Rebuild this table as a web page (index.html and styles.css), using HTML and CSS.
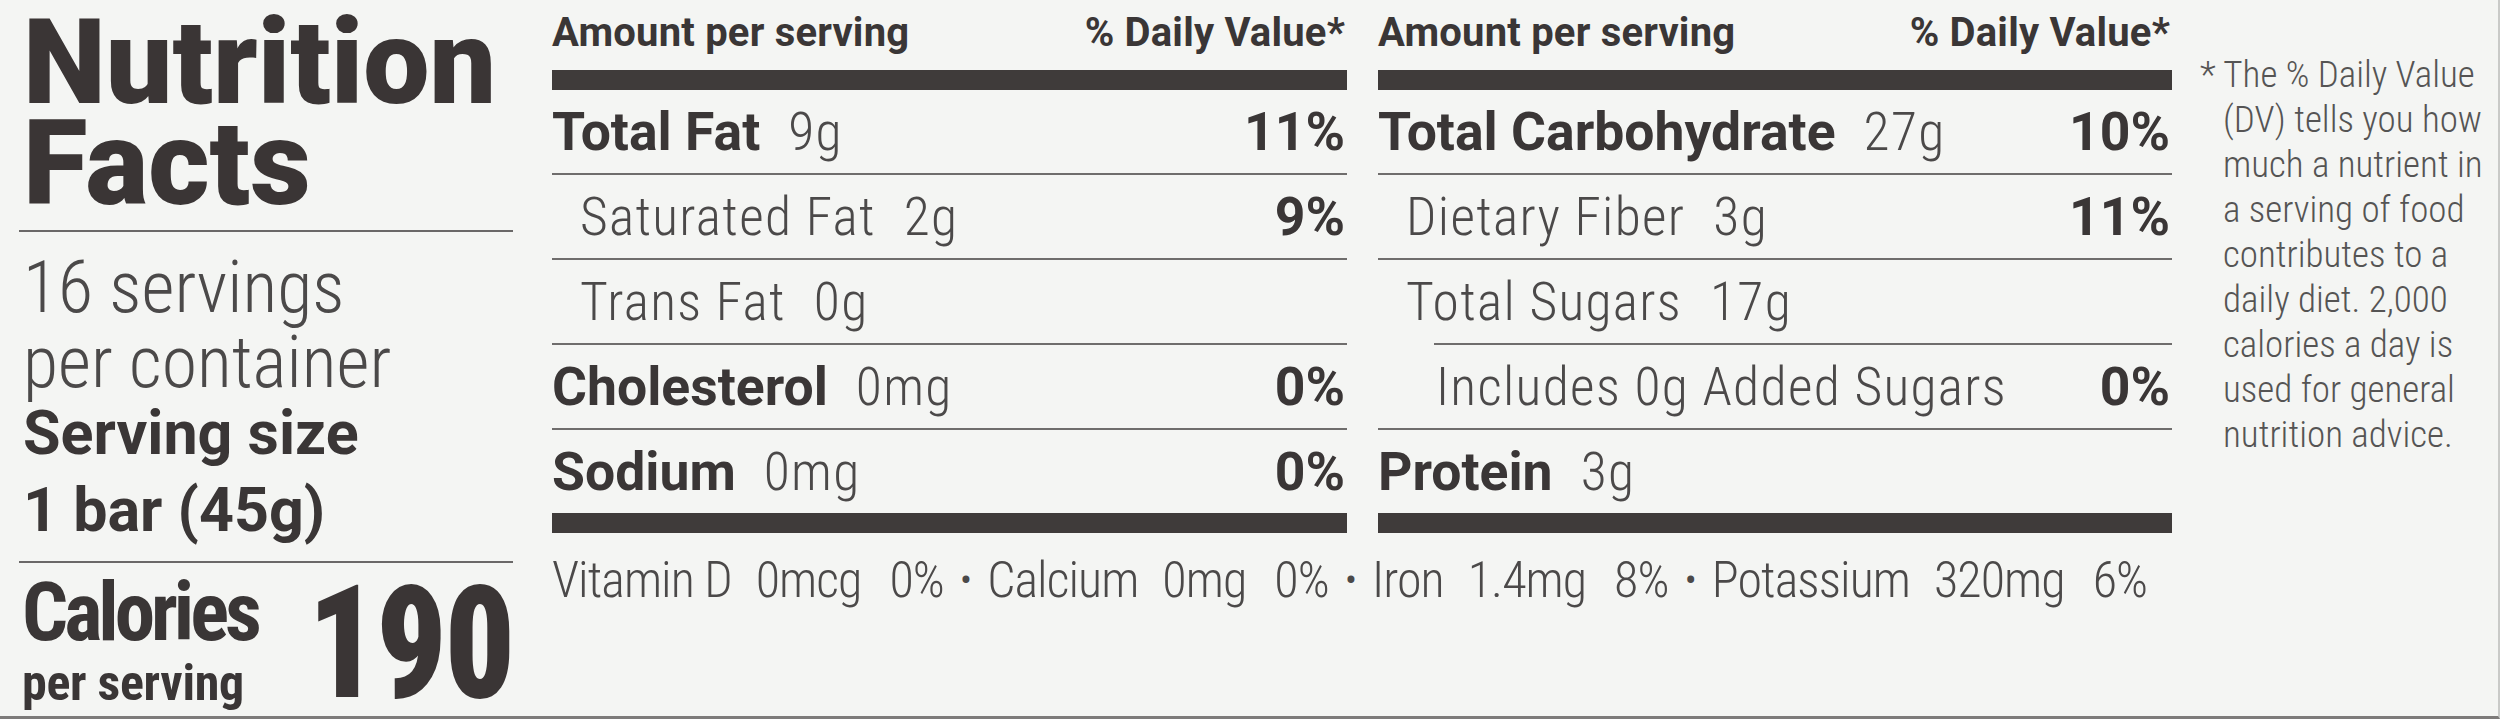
FILE: index.html
```html
<!DOCTYPE html>
<html lang="en">
<head>
<meta charset="utf-8">
<title>Nutrition Facts</title>
<link rel="stylesheet" href="styles.css">
</head>
<body>
<main class="label">
  <section class="title-col">
    <h1 class="title">Nutrition<br>Facts</h1>
    <div class="rule"></div>
    <p class="servings">16 servings<br>per container</p>
    <p class="size">Serving size<br>1 bar (45g)</p>
    <div class="rule"></div>
    <div class="calories">
      <div class="cal-label">
        <span class="cal-word">Calories</span>
        <span class="cal-sub">per serving</span>
      </div>
      <div class="cal-num">190</div>
    </div>
  </section>

  <section class="facts">
    <div class="facts-cols">
      <div class="fcol">
        <div class="head"><span>Amount per serving</span><span>% Daily Value*</span></div>
        <div class="bar"></div>
        <div class="row"><span class="name"><b>Total Fat</b><span class="amt">9g</span></span><b class="dv">11%</b></div>
        <div class="row sub"><span class="name">Saturated Fat<span class="amt">2g</span></span><b class="dv">9%</b></div>
        <div class="row sub"><span class="name">Trans Fat<span class="amt">0g</span></span></div>
        <div class="row"><span class="name"><b>Cholesterol</b><span class="amt">0mg</span></span><b class="dv">0%</b></div>
        <div class="row last"><span class="name"><b>Sodium</b><span class="amt">0mg</span></span><b class="dv">0%</b></div>
        <div class="bar"></div>
      </div>
      <div class="fcol">
        <div class="head"><span>Amount per serving</span><span>% Daily Value*</span></div>
        <div class="bar"></div>
        <div class="row"><span class="name"><b>Total Carbohydrate</b><span class="amt">27g</span></span><b class="dv">10%</b></div>
        <div class="row sub"><span class="name">Dietary Fiber<span class="amt">3g</span></span><b class="dv">11%</b></div>
        <div class="row sub short"><span class="name">Total Sugars<span class="amt">17g</span></span></div>
        <div class="row sub2"><span class="name">Includes 0g Added Sugars</span><b class="dv">0%</b></div>
        <div class="row last"><span class="name"><b>Protein</b><span class="amt">3g</span></span></div>
        <div class="bar"></div>
      </div>
    </div>
    <p class="vitamins">
      <span>Vitamin D</span><span class="amt">0mcg</span><span class="pct">0%</span><span class="dot">•</span><span>Calcium</span><span class="amt">0mg</span><span class="pct">0%</span><span class="dot">•</span><span>Iron</span><span class="amt">1.4mg</span><span class="pct">8%</span><span class="dot">•</span><span>Potassium</span><span class="amt">320mg</span><span class="pct">6%</span>
    </p>
  </section>

  <aside class="note">
    <p>* The % Daily Value<br>(DV) tells you how<br>much a nutrient in<br>a serving of food<br>contributes to a<br>daily diet. 2,000<br>calories a day is<br>used for general<br>nutrition advice.</p>
  </aside>
</main>
</body>
</html>
```
FILE: styles.css
```css
* { box-sizing: border-box; }

html, body {
  margin: 0;
  padding: 0;
}

body {
  width: 2500px;
  height: 719px;
  overflow: hidden;
  background: #f4f5f3;
  color: #3b3737;
  font-family: "Roboto", "Liberation Sans", sans-serif;
  border-right: 2px solid #c9cac8;
  border-bottom: 3px solid #7d7b7a;
}

.label {
  display: flex;
  align-items: flex-start;
  height: 100%;
}

/* ---------- left column ---------- */
.title-col {
  width: 513px;
  padding-left: 19px;
  padding-top: 13px;
  flex: none;
  display: flex;
  flex-direction: column;
}

.title {
  margin: 0 0 0 4px;
  font-family: "Roboto", "Liberation Sans", sans-serif;
  font-size: 118px;
  line-height: 101px;
  font-weight: 900;
  color: #3a3535;
}

.rule {
  height: 2px;
  background: #6a6868;
}

.title + .rule { margin-top: 15px; }

.servings {
  margin: 18px 0 0 4px;
  font-family: "Roboto Condensed", "Roboto", sans-serif;
  font-size: 72px;
  line-height: 75px;
  font-weight: 300;
  color: #4b4949;
}

.size {
  margin: -5px 0 0 4px;
  font-size: 61px;
  line-height: 77px;
  font-weight: 700;
  color: #3a3636;
}

.size + .rule { margin-top: 12px; }

.calories {
  display: flex;
  justify-content: space-between;
  align-items: flex-end;
  margin-top: 10px;
  font-family: "Roboto Condensed", "Roboto", sans-serif;
}

.cal-label {
  display: flex;
  flex-direction: column;
  padding-left: 3px;
}

.cal-word {
  font-size: 81px;
  line-height: 80px;
  font-weight: 700;
  letter-spacing: -4px;
  color: #3a3636;
}

.cal-sub {
  font-size: 50px;
  line-height: 60px;
  font-weight: 700;
  letter-spacing: -0.3px;
  color: #3a3636;
}

.cal-num {
  font-size: 158px;
  line-height: 140px;
  font-weight: 900;
  color: #3a3535;
  letter-spacing: -2px;
  transform: scaleX(0.87);
  transform-origin: right center;
}

/* ---------- facts columns ---------- */
.facts {
  flex: none;
  width: 1620px;
  margin-left: 39px;
}

.facts-cols {
  display: grid;
  grid-template-columns: 795px 794px;
  column-gap: 31px;
}

.head {
  height: 70px;
  display: flex;
  justify-content: space-between;
  font-size: 40px;
  line-height: 66px;
  font-weight: 700;
  letter-spacing: 0.2px;
  padding-right: 2px;
  color: #3a3636;
}

.bar {
  height: 20px;
  background: #3f3b3a;
}

.row {
  height: 85px;
  display: flex;
  justify-content: space-between;
  font-size: 53.5px;
  line-height: 83px;
  border-bottom: 2px solid #6f6d6c;
  padding-right: 2px;
}

.row.last {
  height: 83px;
  border-bottom: none;
}

.row .name {
  font-family: "Roboto Condensed", "Roboto", sans-serif;
  font-weight: 300;
  color: #4b4949;
  letter-spacing: 1.3px;
}

.row .name b,
.row .dv {
  font-family: "Roboto", "Liberation Sans", sans-serif;
  font-weight: 700;
  color: #3a3636;
  letter-spacing: 0;
}

.row .amt {
  margin-left: 28px;
}

.row.sub .name { padding-left: 28px; }
.row.sub2 .name { padding-left: 58px; }

.row.short {
  border-bottom: none;
  background: linear-gradient(#6f6d6c, #6f6d6c) no-repeat 56px 100% / calc(100% - 56px) 2px;
}

/* ---------- vitamins line ---------- */
.vitamins {
  margin: 0;
  display: flex;
  white-space: nowrap;
  font-family: "Roboto Condensed", "Roboto", sans-serif;
  font-size: 50px;
  line-height: 94px;
  font-weight: 300;
  letter-spacing: -0.95px;
  color: #4b4949;
}

.vitamins .amt { margin-left: 24px; }
.vitamins .pct { margin-left: 28px; }
.vitamins .dot { margin: 0 16px; font-size: 38px; }

/* ---------- footnote ---------- */
.note {
  flex: none;
  width: 300px;
  margin-left: 28px;
  padding-top: 52px;
}

.note p {
  margin: 0;
  padding-left: 23px;
  text-indent: -23px;
  font-family: "Roboto Condensed", "Roboto", sans-serif;
  font-size: 37px;
  line-height: 45px;
  font-weight: 300;
  color: #555454;
}
```
